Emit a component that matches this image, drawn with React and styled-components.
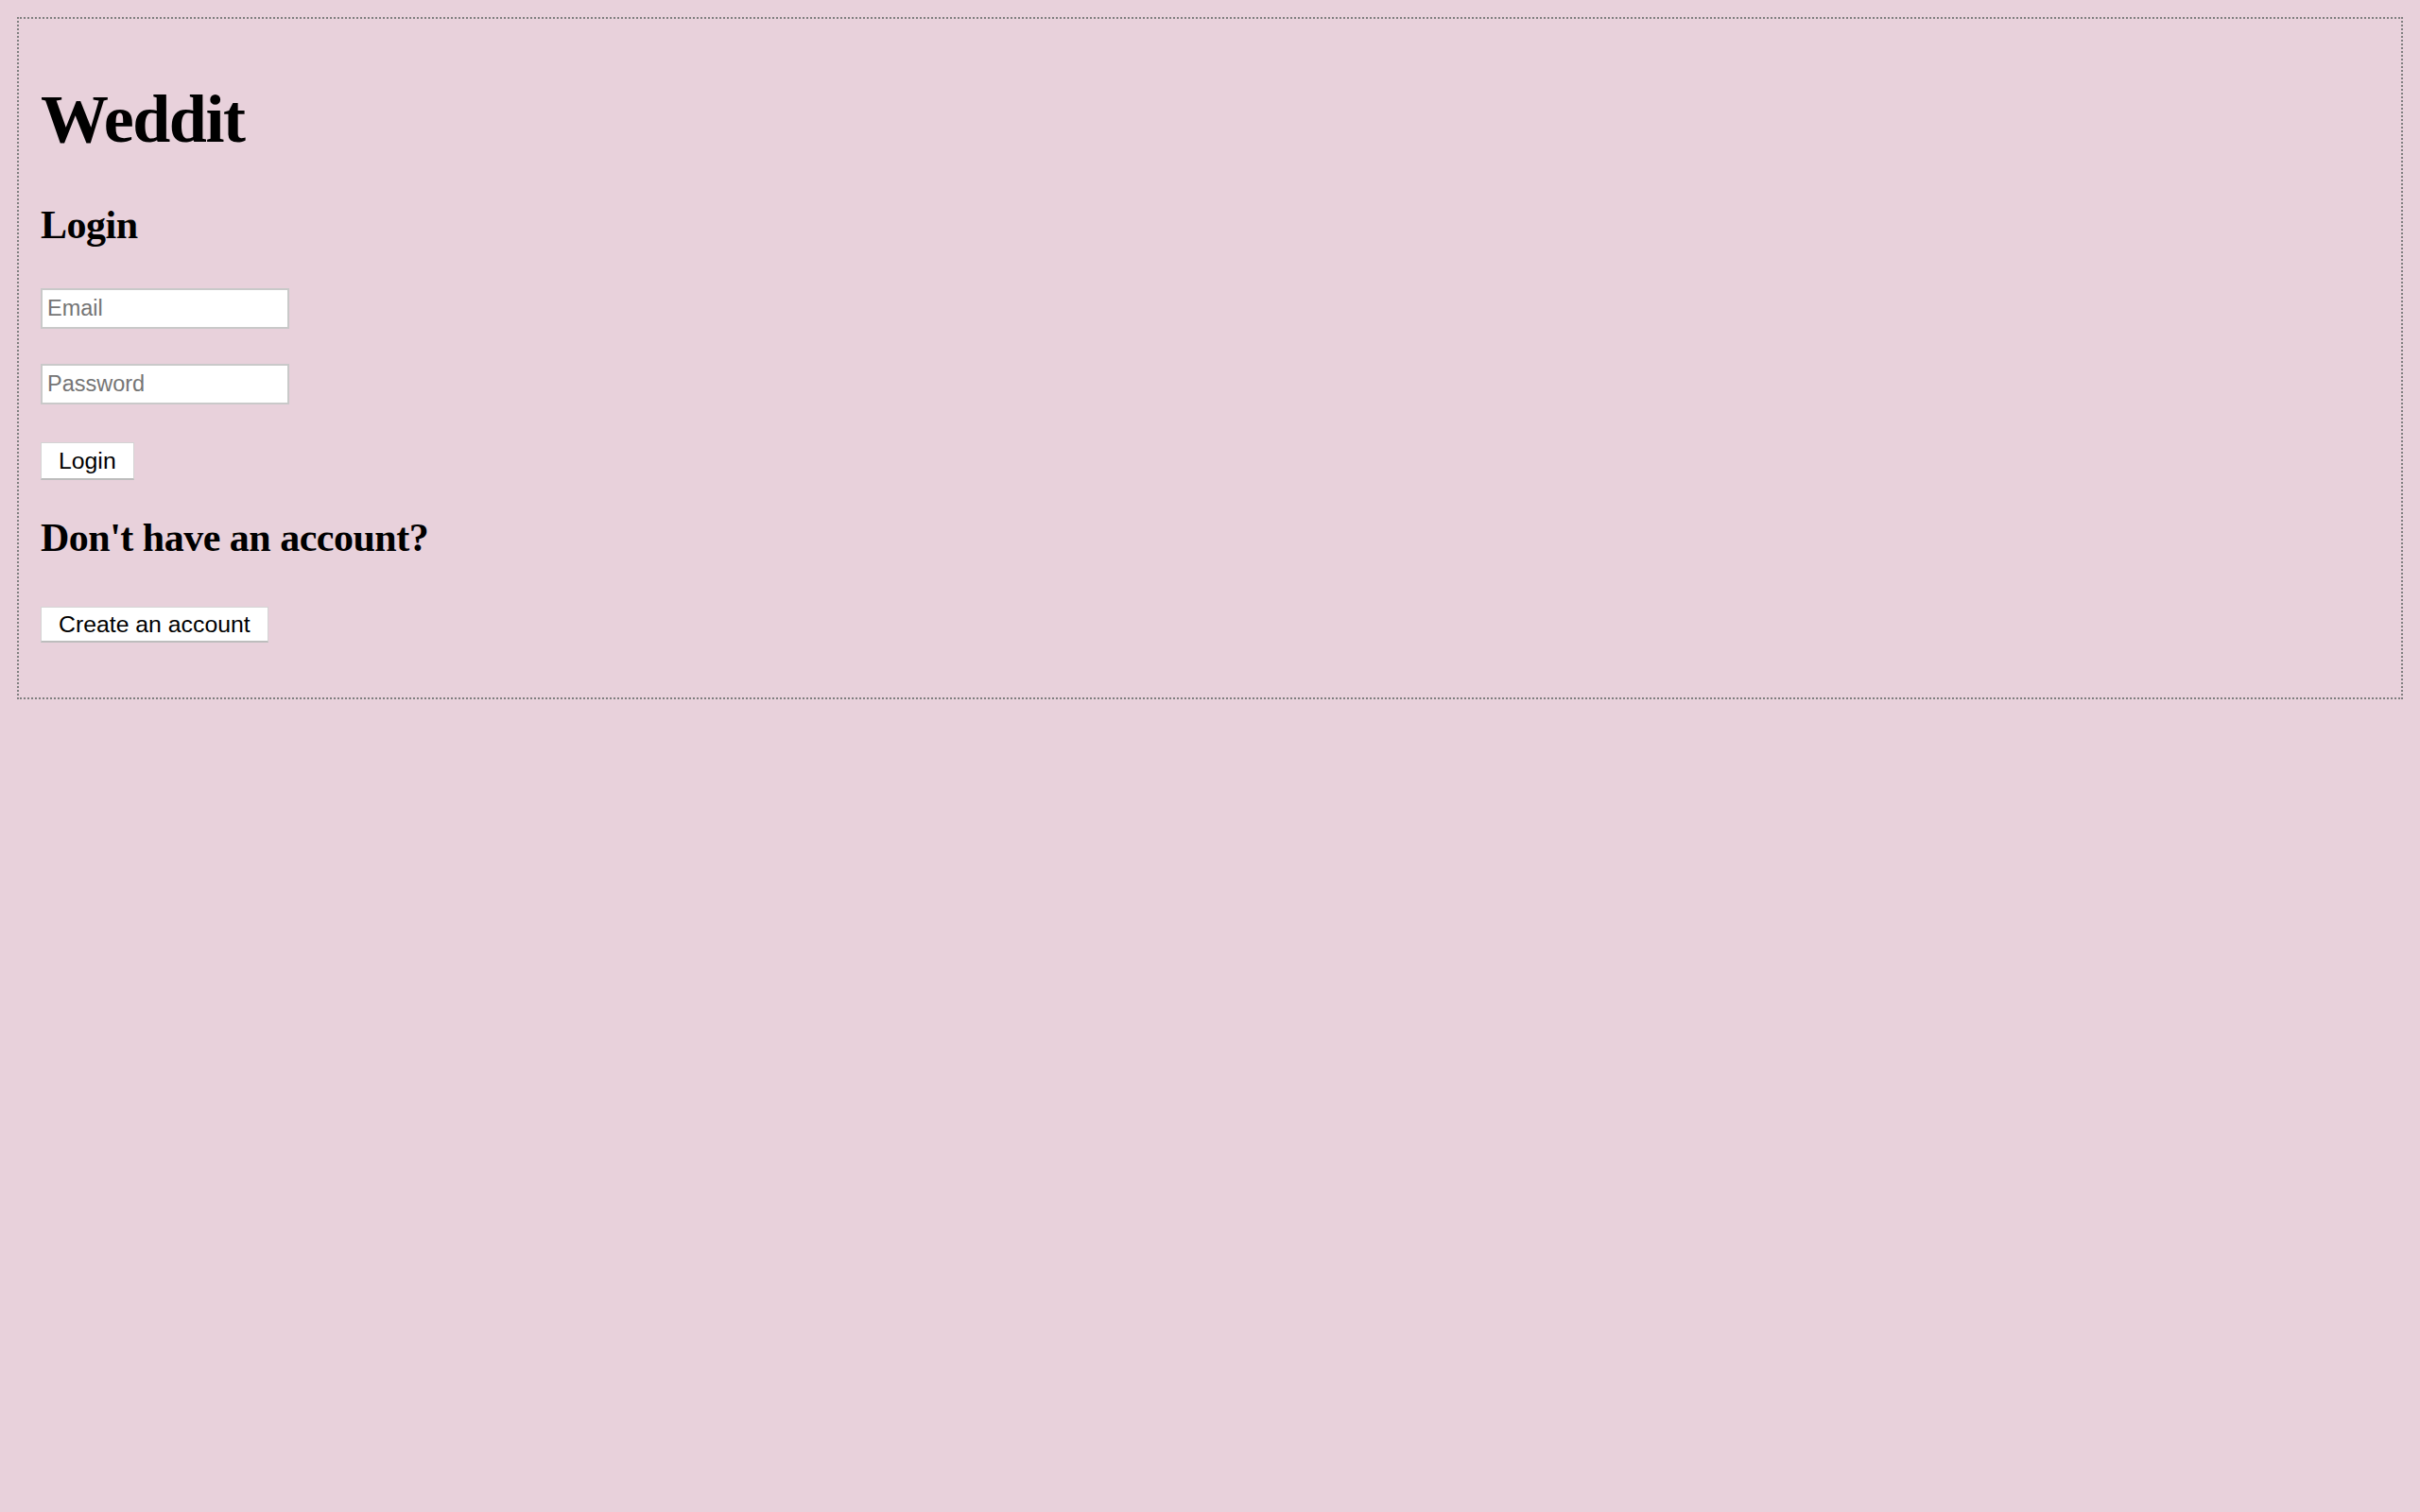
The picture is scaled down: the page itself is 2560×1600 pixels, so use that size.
import React from "react";
import styled, { createGlobalStyle } from "styled-components";

const Global = createGlobalStyle`
  html, body {
    background: #e8d1db;
  }
  body {
    margin: 8px;
    font-family: "Liberation Serif", "Times New Roman", serif;
    color: #000;
  }
  * { box-sizing: border-box; }
`;

const Panel = styled.main`
  margin: 10px;
  border: 2px dotted #7f7f7f;
  padding: 70px 23px 58px;
  display: flex;
  flex-direction: column;
  align-items: flex-start;
`;

const Title = styled.h1`
  margin: 0;
  font-family: "Liberation Serif", "Times New Roman", serif;
  font-weight: 700;
  font-size: 72px;
  line-height: 1;
  letter-spacing: -1.4px;
`;

const Heading = styled.h2`
  margin: ${(p) => p.$top}px 0 0;
  font-family: "Liberation Serif", "Times New Roman", serif;
  font-weight: 700;
  font-size: 42px;
  line-height: 1;
  letter-spacing: -0.5px;
`;

const Form = styled.form`
  display: flex;
  flex-direction: column;
  align-items: flex-start;
  margin-top: 46px;
`;

const Field = styled.input`
  width: 263px;
  height: 43px;
  margin-top: ${(p) => p.$top || 0}px;
  padding: 0 5px;
  border: 2px solid #c9c9c9;
  background: #fff;
  font-family: "Liberation Sans", Arial, sans-serif;
  font-size: 23.5px;
  color: #000;
  outline: none;
  &::placeholder {
    color: #757575;
  }
`;

const Button = styled.button`
  height: ${(p) => p.$h}px;
  margin-top: ${(p) => p.$top || 0}px;
  padding: 0 18px 0 18px;
  border: 1px solid #d4d4d4;
  border-bottom: 2px solid #bdbdbd;
  background: #fff;
  font-family: "Liberation Sans", Arial, sans-serif;
  font-size: 24.8px;
  color: #000;
  cursor: pointer;
`;

export default function App() {
  return (
    <>
      <Global />
      <Panel>
        <Title>Weddit</Title>
        <Heading $top={55}>Login</Heading>
        <Form onSubmit={(e) => e.preventDefault()}>
          <Field type="email" placeholder="Email" />
          <Field type="password" placeholder="Password" $top={37} />
          <Button type="submit" $h={40} $top={40}>Login</Button>
        </Form>
        <Heading $top={40}>Don't have an account?</Heading>
        <Button type="button" $h={38} $top={52}>Create an account</Button>
      </Panel>
    </>
  );
}
